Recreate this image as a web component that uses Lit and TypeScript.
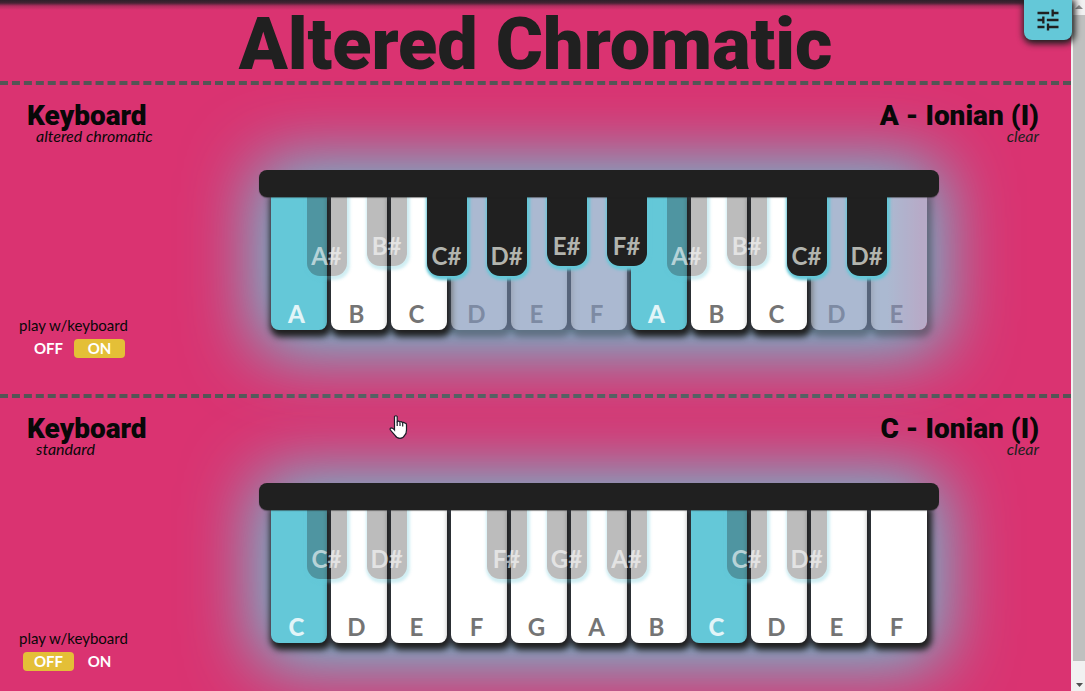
import { LitElement, html, css } from "lit";
import { customElement, property, state } from "lit/decorators.js";
import { classMap } from "lit/directives/class-map.js";

interface SharpKey {
  name: string;
  long?: boolean;
  muted?: boolean;
}

interface PianoKey {
  name: string;
  root?: boolean;
  muted?: boolean;
  sharp?: SharpKey;
}

const alteredKeys: PianoKey[] = [
  { name: "A", root: true, sharp: { name: "A#", long: true, muted: true } },
  { name: "B", sharp: { name: "B#", muted: true } },
  { name: "C", sharp: { name: "C#", long: true } },
  { name: "D", muted: true, sharp: { name: "D#", long: true } },
  { name: "E", muted: true, sharp: { name: "E#" } },
  { name: "F", muted: true, sharp: { name: "F#" } },
  { name: "A", root: true, sharp: { name: "A#", long: true, muted: true } },
  { name: "B", sharp: { name: "B#", muted: true } },
  { name: "C", sharp: { name: "C#", long: true } },
  { name: "D", muted: true, sharp: { name: "D#", long: true } },
  { name: "E", muted: true },
];

const standardKeys: PianoKey[] = [
  { name: "C", root: true, sharp: { name: "C#", muted: true } },
  { name: "D", sharp: { name: "D#", muted: true } },
  { name: "E" },
  { name: "F", sharp: { name: "F#", muted: true } },
  { name: "G", sharp: { name: "G#", muted: true } },
  { name: "A", sharp: { name: "A#", muted: true } },
  { name: "B" },
  { name: "C", root: true, sharp: { name: "C#", muted: true } },
  { name: "D", sharp: { name: "D#", muted: true } },
  { name: "E" },
  { name: "F" },
];

@customElement("piano-keys")
export class PianoKeys extends LitElement {
  @property({ attribute: false }) keys: PianoKey[] = [];

  static styles = css`
    :host {
      display: block;
      padding: 0 12px;
      position: relative;
    }
    .rail {
      position: absolute;
      inset: 0 0 auto 0;
      height: 27px;
      border-radius: 8px;
      background: #202020;
      box-shadow: 0 1px 1px rgba(32, 32, 32, 0.5);
      z-index: 2;
    }
    .bed {
      display: flex;
      gap: 4px;
      padding-top: 24px;
      border-radius: 8px;
      background: linear-gradient(90deg, #7c92b7 94%, #8e7ba8 99%);
      box-shadow: 0 7px 70px 16px #64c8d8;
    }
    .slot {
      position: relative;
    }
    button {
      display: flex;
      align-items: flex-end;
      justify-content: center;
      border: 0;
      margin: 0;
      font: 700 24px/28px Lato, sans-serif;
      cursor: pointer;
    }
    .white {
      width: 56px;
      height: 136px;
      padding: 0 4px 2px 0;
      border-radius: 0 0 8px 8px;
      background: #fff;
      color: #747474;
      box-shadow: 2px 4px 6px 3px #202020;
    }
    .white.root {
      background: #64c8d8;
      color: #e2f5f8;
      font-weight: 900;
    }
    .white.muted {
      opacity: 0.36;
      color: #807c80;
    }
    .sharp {
      position: absolute;
      z-index: 1;
      top: 0;
      left: 36px;
      width: 40px;
      height: 72px;
      padding: 0 0 6px;
      border-radius: 0 0 13px 13px;
      background: #202020;
      color: #b2b4ae;
      box-shadow: 1px 2px 3px 2px #64c8d8;
    }
    .sharp.long {
      height: 82px;
    }
    .sharp.muted {
      background: rgba(32, 32, 32, 0.3);
      box-shadow: 1px 2px 3px 2px rgba(100, 200, 216, 0.3);
      color: rgba(255, 255, 255, 0.6);
    }
  `;

  render() {
    return html`
      <div class="rail"></div>
      <div class="bed">
        ${this.keys.map(
          (key) => html`
            <div class="slot">
              <button class=${classMap({ white: true, root: !!key.root, muted: !!key.muted })}>
                ${key.name}
              </button>
              ${key.sharp
                ? html`<button
                    class=${classMap({
                      sharp: true,
                      long: !!key.sharp.long,
                      muted: !!key.sharp.muted,
                    })}
                  >
                    ${key.sharp.name}
                  </button>`
                : null}
            </div>
          `
        )}
      </div>
    `;
  }
}

@customElement("keyboard-panel")
export class KeyboardPanel extends LitElement {
  @property() tuning = "";
  @property() scale = "";
  @property({ attribute: false }) keys: PianoKey[] = [];
  @property({ type: Boolean }) playable = false;

  static styles = css`
    :host {
      display: block;
      border-top: 4px dashed #555;
      padding-bottom: 36px;
    }
    .head {
      display: flex;
      justify-content: space-between;
      padding: 18px 32px 27px 27px;
      position: relative;
      z-index: 1;
    }
    h2 {
      margin: 0;
      font: 900 28px/26px Roboto, sans-serif;
      color: #080808;
    }
    .tuning {
      margin: 0 0 0 9px;
      font: italic 400 16px/14px Lato, sans-serif;
      color: #080808;
    }
    .scale {
      text-align: right;
    }
    .clear {
      display: block;
      margin-left: auto;
      border: 0;
      padding: 0;
      background: none;
      font: italic 400 16px/14px Lato, sans-serif;
      color: #202020;
      cursor: pointer;
    }
    .body {
      display: grid;
      grid-template-columns: 126px 1fr;
      min-height: 188px;
    }
    piano-keys {
      justify-self: center;
      align-self: start;
    }
    .play {
      align-self: end;
      padding-left: 19px;
      font: 400 15px/20px Lato, sans-serif;
      color: #080808;
      white-space: nowrap;
      position: relative;
      z-index: 1;
    }
    .switch {
      display: flex;
      padding: 4px 0 0 4px;
    }
    .switch button {
      width: 51px;
      border: 0;
      border-radius: 4px;
      padding: 0;
      background: none;
      font: 700 15px/19px Lato, sans-serif;
      color: #fff;
      cursor: pointer;
    }
    .switch .on {
      background: #e4bf37;
    }
  `;

  render() {
    return html`
      <div class="head">
        <div>
          <h2>Keyboard</h2>
          <p class="tuning">${this.tuning}</p>
        </div>
        <div class="scale">
          <h2>${this.scale}</h2>
          <button class="clear">clear</button>
        </div>
      </div>
      <div class="body">
        <div class="play" role="group" aria-labelledby="play-label">
          <span id="play-label">play w/keyboard</span>
          <div class="switch">
            <button
              class=${classMap({ on: !this.playable })}
              aria-pressed=${!this.playable}
              @click=${() => (this.playable = false)}
            >OFF</button>
            <button
              class=${classMap({ on: this.playable })}
              aria-pressed=${this.playable}
              @click=${() => (this.playable = true)}
            >ON</button>
          </div>
        </div>
        <piano-keys .keys=${this.keys}></piano-keys>
      </div>
    `;
  }
}

@customElement("app-root")
export class AppRoot extends LitElement {
  @state() private menuOpen = false;

  static styles = css`
    :host {
      display: grid;
      grid-template-columns: 1fr 14px;
      height: 100vh;
      overflow: hidden;
      position: relative;
      background: #da3371;
    }
    .page {
      overflow: hidden;
      min-width: 0;
    }
    header {
      height: 81px;
      background: linear-gradient(#2c202a, rgba(44, 32, 42, 0.85) 3px, rgba(44, 32, 42, 0.25) 6px, transparent 10px);
    }
    h1 {
      margin: 0;
      padding-top: 5px;
      text-align: center;
      font: 900 72px/80px Roboto, sans-serif;
      color: #202020;
      white-space: nowrap;
    }
    .tools {
      position: absolute;
      top: 0;
      right: 13px;
      width: 48px;
      height: 40px;
      display: grid;
      place-items: center;
      border: 0;
      padding: 0;
      border-radius: 0 0 8px 8px;
      background: #64c8d8;
      box-shadow: 1px 2px 6px 2px #202020;
      cursor: pointer;
      z-index: 3;
    }
    .scrollbar {
      display: flex;
      flex-direction: column;
      padding-left: 2px;
      background: #f1f1f1;
    }
    .scrollbar svg {
      display: block;
    }
    .thumb {
      flex: 1;
      margin-bottom: 15px;
      background: #bfc0bf;
    }
    .pointer {
      position: absolute;
      left: 389px;
      top: 415px;
      z-index: 3;
    }
  `;

  render() {
    return html`
      <main class="page">
        <header><h1>Altered Chromatic</h1></header>
        <keyboard-panel
          tuning="altered chromatic"
          scale="A - Ionian (I)"
          playable
          .keys=${alteredKeys}
        ></keyboard-panel>
        <keyboard-panel
          tuning="standard"
          scale="C - Ionian (I)"
          .keys=${standardKeys}
        ></keyboard-panel>
      </main>
      <div class="scrollbar" aria-hidden="true">
        <svg width="12" height="15" viewBox="0 0 12 15"><path d="M2 9l4-4 4 4z" fill="#8a8a8a" /></svg>
        <div class="thumb"></div>
        <svg width="12" height="15" viewBox="0 0 12 15"><path d="M3 7h7l-3.500 4z" fill="#505050" /></svg>
      </div>
      <button
        class="tools"
        aria-label="Settings"
        aria-expanded=${this.menuOpen}
        @click=${() => (this.menuOpen = !this.menuOpen)}
      >
        <svg width="28" height="28" viewBox="0 0 24 24" fill="#202020">
          <path
            d="M3 17v2h6v-2H3zM3 5v2h10V5H3zm10 16v-2h8v-2h-8v-2h-2v6h2zM7 9v2H3v2h4v2h2V9H7zm14 4v-2H11v2h10zm-6-4h2V7h4V5h-4V3h-2v6z"
          />
        </svg>
      </button>
      <svg class="pointer" width="19" height="24" viewBox="0 0 19 24" aria-hidden="true">
        <path
          d="M5.500 1.500Q7 0 8.200 1.500V6.500Q9.500 5.600 10.800 7Q12.400 6.200 13.500 7.600Q14.800 7 16 8.200Q17.500 8.200 17.500 10V15Q17.500 19 15.500 20.500Q14.500 23.200 11 23.300Q7.500 23.300 6.200 20.500L1.200 14.800Q.8 12.800 2.500 12.800Q4 13 5.500 15z"
          fill="#fff"
          stroke="#1c1c28"
          stroke-width="1.200"
        />
        <path d="M8.200 6.500v4.500M11 7.500v3.500M13.700 8v3.500" stroke="#1c1c28" stroke-width="1.200" fill="none" />
      </svg>
    `;
  }
}
